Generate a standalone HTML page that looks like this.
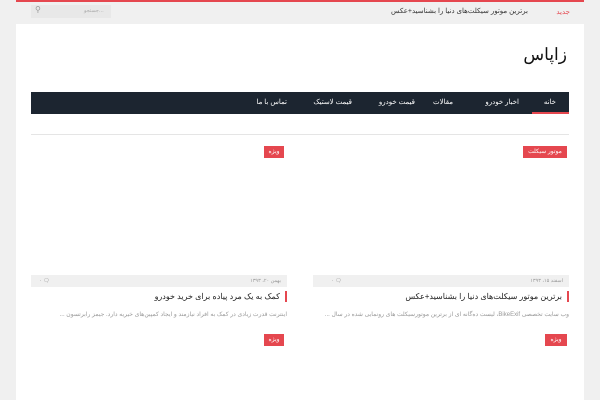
<!DOCTYPE html>
<html><head><meta charset="utf-8"><style>
*{margin:0;padding:0;box-sizing:border-box}
body{width:600px;height:400px;background:#f0f0f0;font-family:"Liberation Sans","Noto Sans CJK SC",sans-serif;position:relative;overflow:hidden}
.a{position:absolute}
.wrap{left:16px;top:0;width:568px;height:400px;background:#fff}
.tag{background:#e5474f;color:#fff;font-size:6px;height:12px;line-height:12px;text-align:center;white-space:nowrap;overflow:hidden}
.meta{height:12px;background:#f0f0f0;font-size:5px;color:#999;line-height:12px}
.t{font-size:8px;color:#222;direction:rtl;white-space:nowrap;border-right:2px solid #e5474f;padding-right:5px;height:11px;line-height:11px}
.ex{font-size:6px;color:#999;direction:rtl;white-space:nowrap}
.nav span{position:absolute;top:0;line-height:22px;font-size:7px;color:#fff;white-space:nowrap;direction:rtl}
</style></head><body>
<div class="a wrap"></div>
<div class="a" style="left:16px;top:0;width:568px;height:2px;background:#e5474f"></div>
<div class="a" style="left:16px;top:2px;width:568px;height:22px;background:#f0f0f0"></div>
<div class="a" style="left:31px;top:5px;width:80px;height:13px;background:#e8e8e8"></div>
<div class="a" style="left:35px;top:5px;font-size:8px;color:#999">&#9906;</div>
<div class="a" style="left:84px;top:8px;font-size:5px;color:#aaa">جستجو…</div>
<div class="a" style="right:72px;top:7px;font-size:7px;color:#333;direction:rtl;white-space:nowrap">برترین موتور سیکلت‌های دنیا را بشناسید+عکس</div>
<div class="a" style="right:30px;top:8px;font-size:7px;color:#e5474f">جدید</div>
<div class="a" style="right:33px;top:45px;font-size:17px;color:#111;direction:rtl">زاپاس</div>
<div class="a nav" style="left:31px;top:92px;width:538px;height:22px;background:#1c2530">
<span style="right:13px">خانه</span>
<span style="right:50px">اخبار خودرو</span>
<span style="right:116px">مقالات</span>
<span style="right:154px">قیمت خودرو</span>
<span style="right:217px">قیمت لاستیک</span>
<span style="right:282px">تماس با ما</span>
<div class="a" style="left:501px;top:20px;width:37px;height:2px;background:#e5474f"></div>
</div>
<div class="a" style="left:31px;top:134px;width:538px;height:1px;background:#e5e5e5"></div>

<div class="a tag" style="left:523px;top:146px;width:44px">موتور سیکلت</div>
<div class="a tag" style="left:264px;top:146px;width:20px">ویژه</div>

<div class="a meta" style="left:313px;top:275px;width:256px"><span style="position:absolute;right:6px">اسفند ۱۵، ۱۳۹۳</span><span style="position:absolute;left:18px">۰ &#128488;</span></div>
<div class="a meta" style="left:31px;top:275px;width:256px"><span style="position:absolute;right:6px">بهمن ۲۰، ۱۳۹۳</span><span style="position:absolute;left:8px">۰ &#128488;</span></div>

<div class="a t" style="right:31px;top:291px">برترین موتور سیکلت‌های دنیا را بشناسید+عکس</div>
<div class="a t" style="right:313px;top:291px">کمک به یک مرد پیاده برای خرید خودرو</div>

<div class="a ex" style="right:31px;top:311px">وب سایت تخصصی BikeExif، لیست ده‌گانه ای از برترین موتورسیکلت های رونمایی شده در سال ...</div>
<div class="a ex" style="right:313px;top:311px">اینترنت قدرت زیادی در کمک به افراد نیازمند و ایجاد کمپین‌های خیریه دارد. جیمز رابرتسون ...</div>

<div class="a tag" style="left:545px;top:334px;width:22px">ویژه</div>
<div class="a tag" style="left:264px;top:334px;width:20px">ویژه</div>
</body></html>
